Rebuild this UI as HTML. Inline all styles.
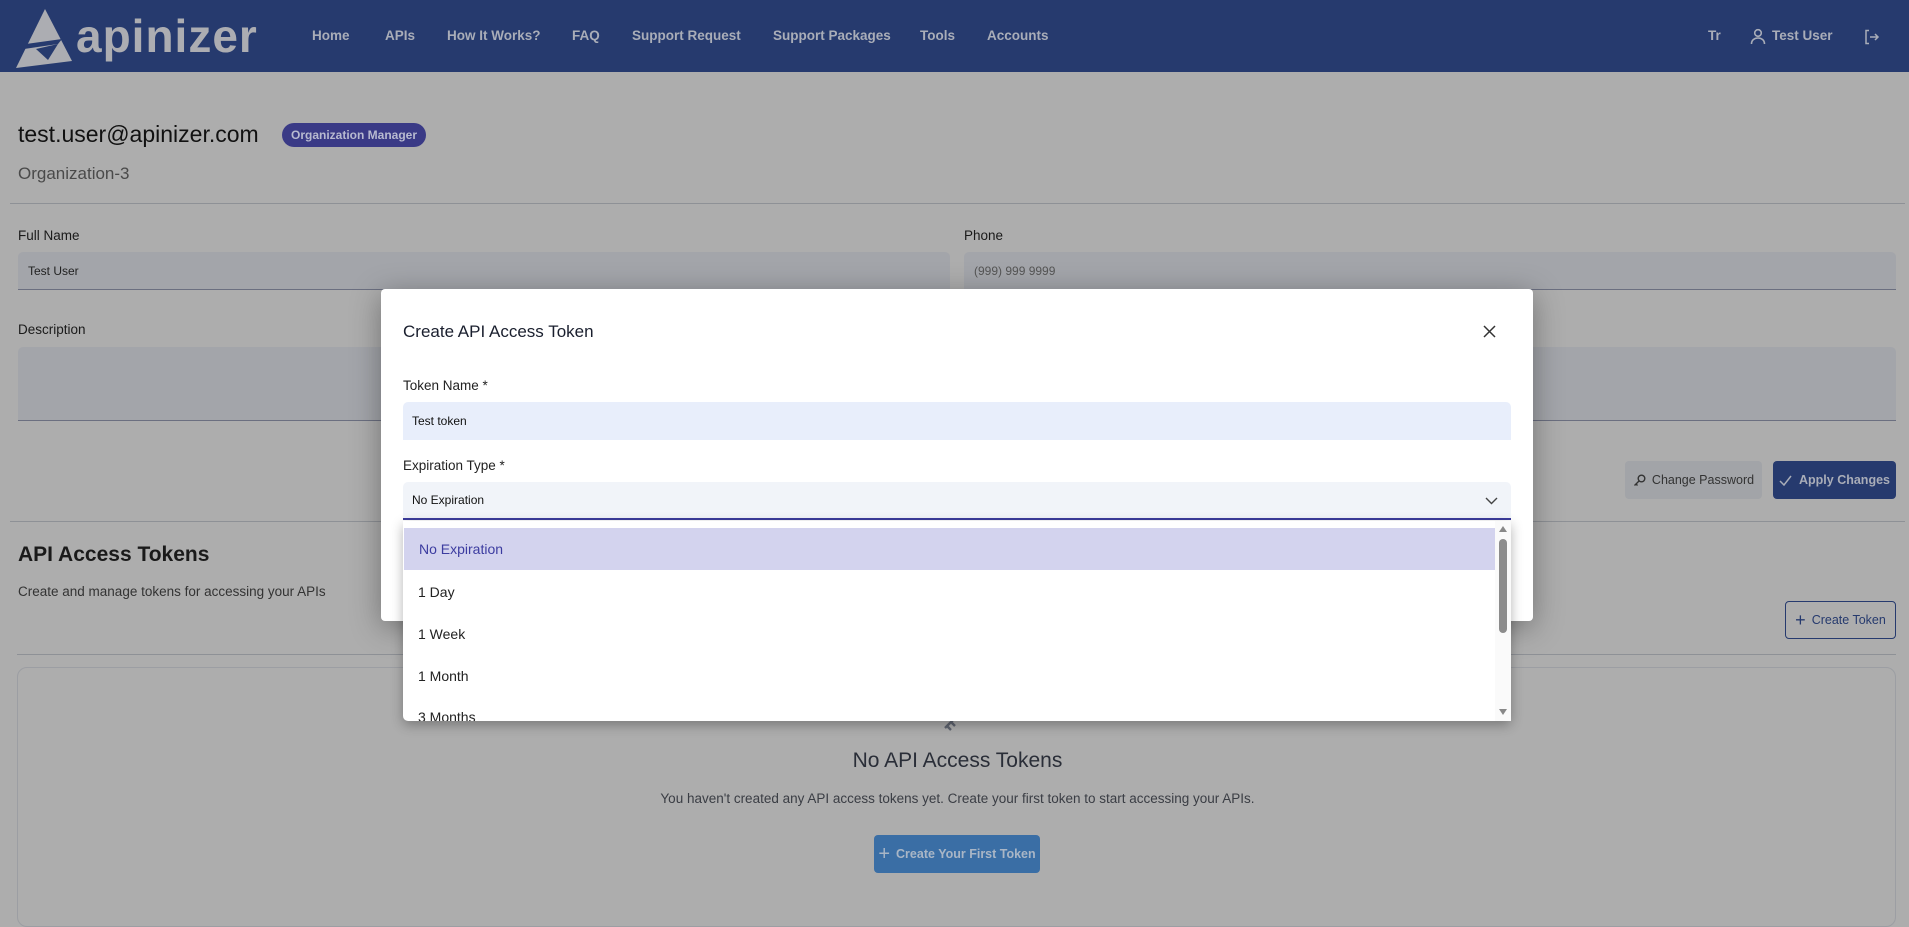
<!DOCTYPE html>
<html><head><meta charset="utf-8"><style>
*{box-sizing:border-box;margin:0;padding:0}
body{width:1909px;height:910px;overflow:hidden;background:#adadad;font-family:"Liberation Sans",sans-serif;position:relative;color:#111}
.abs{position:absolute}
.hdr{left:0;top:0;width:1909px;height:72px;background:#263a6e}
.nav{top:28px;font-size:13.5px;font-weight:bold;color:#a9adb8;white-space:nowrap}
.lbl{font-size:13.5px;color:#1a1a1a}
.inp{background:#a3a5aa;border-bottom:1.5px solid #6b6f80;border-radius:5px 5px 0 0;font-size:12px;color:#222;padding-left:10px;display:flex;align-items:center}
.hr{height:1px;background:#8e9196}
.opt{left:403px;width:1092px;height:42px;font-size:14px;color:#222;padding-left:15px;display:flex;align-items:center}
</style></head><body>
<div class="abs hdr"></div>
<svg class="abs" style="left:0;top:0" width="80" height="72"><polygon points="45,9 16,68 72,61" fill="#acadb2"/><polygon points="26,44 62,39 58,44 24,49" fill="#263a6e"/><polygon points="36,49 58,44 48,60" fill="#263a6e"/></svg>
<div class="abs" style="left:76px;top:6px;font-size:46px;font-weight:bold;color:#acadb2;letter-spacing:1px;line-height:60px">apinizer</div>
<div class="abs nav" style="left:312px">Home</div>
<div class="abs nav" style="left:385px">APIs</div>
<div class="abs nav" style="left:447px">How It Works?</div>
<div class="abs nav" style="left:572px">FAQ</div>
<div class="abs nav" style="left:632px">Support Request</div>
<div class="abs nav" style="left:773px">Support Packages</div>
<div class="abs nav" style="left:920px">Tools</div>
<div class="abs nav" style="left:987px">Accounts</div>
<div class="abs nav" style="left:1708px">Tr</div>
<svg class="abs" style="left:1750px;top:28px" width="16" height="17" fill="none" stroke="#a9adb8" stroke-width="1.6"><circle cx="8" cy="5" r="3.3"/><path d="M1.5 16c0-4 3-6 6.5-6s6.5 2 6.5 6"/></svg>
<div class="abs nav" style="left:1772px">Test User</div>
<svg class="abs" style="left:1864px;top:29px" width="16" height="16" fill="none" stroke="#a9adb8" stroke-width="1.5"><path d="M5 1.5H2v13h3M6 8h8M11 5l3 3-3 3"/></svg>

<div class="abs" style="left:18px;top:121px;font-size:23px;color:#111">test.user@apinizer.com</div>
<div class="abs" style="left:282px;top:123px;width:144px;height:24px;border-radius:12px;background:#3a3a86;color:#b8bad0;font-size:12px;font-weight:bold;display:flex;align-items:center;justify-content:center">Organization Manager</div>
<div class="abs" style="left:18px;top:164px;font-size:17px;color:#4a4a4a">Organization-3</div>
<div class="abs hr" style="left:10px;top:203px;width:1895px"></div>
<div class="abs lbl" style="left:18px;top:228px">Full Name</div>
<div class="abs inp" style="left:18px;top:252px;width:932px;height:38px">Test User</div>
<div class="abs lbl" style="left:964px;top:228px">Phone</div>
<div class="abs inp" style="left:964px;top:252px;width:932px;height:38px;color:#555">(999) 999 9999</div>
<div class="abs lbl" style="left:18px;top:322px">Description</div>
<div class="abs inp" style="left:18px;top:347px;width:1878px;height:74px"></div>
<div class="abs" style="left:1625px;top:461px;width:137px;height:38px;background:#a2a4a8;border-radius:4px;font-size:12.5px;color:#333;display:flex;align-items:center;justify-content:center;gap:6px"><svg width="13" height="13" fill="none" stroke="#333" stroke-width="1.4"><circle cx="8.5" cy="4.5" r="3.3"/><path d="M6 7L1.5 11.5M3 10l1.5 1.5"/></svg>Change Password</div>
<div class="abs" style="left:1773px;top:461px;width:123px;height:38px;background:#263a6e;border-radius:4px;font-size:12.5px;font-weight:bold;color:#a9adb8;display:flex;align-items:center;justify-content:center;gap:7px"><svg width="13" height="11" fill="none" stroke="#a9adb8" stroke-width="1.5"><path d="M1 6l4 4 7-9"/></svg>Apply Changes</div>
<div class="abs hr" style="left:10px;top:521px;width:1895px"></div>
<div class="abs" style="left:18px;top:543px;font-size:21px;font-weight:bold;color:#1a1a1a">API Access Tokens</div>
<div class="abs" style="left:18px;top:584px;font-size:13.5px;color:#333">Create and manage tokens for accessing your APIs</div>
<div class="abs" style="left:1785px;top:601px;width:111px;height:38px;border:1.5px solid #263a6e;border-radius:4px;font-size:12.5px;color:#263a6e;display:flex;align-items:center;justify-content:center;gap:6px"><span style="font-size:18px;line-height:12px">+</span>Create Token</div>
<div class="abs hr" style="left:17px;top:654px;width:1879px"></div>
<div class="abs" style="left:17px;top:667px;width:1879px;height:260px;border:1px solid #9c9ea3;border-radius:10px"></div>
<svg class="abs" style="left:938px;top:690px" width="50" height="50" fill="none" stroke="#5f6470" stroke-width="2.4"><circle cx="34" cy="12" r="9"/><path d="M27 18L7 38M9 36l4 4M13 32l4 4"/></svg>
<div class="abs" style="left:0;top:749px;width:1915px;text-align:center;font-size:21px;color:#2a2e38">No API Access Tokens</div>
<div class="abs" style="left:0;top:791px;width:1915px;text-align:center;font-size:13.5px;color:#3a3d44">You haven't created any API access tokens yet. Create your first token to start accessing your APIs.</div>
<div class="abs" style="left:874px;top:835px;width:166px;height:38px;background:#3a6ea5;border-radius:4px;font-size:12.5px;font-weight:bold;color:#a9b6c6;display:flex;align-items:center;justify-content:center;gap:6px"><span style="font-size:20px;font-weight:normal;line-height:12px">+</span>Create Your First Token</div>

<div class="abs" style="left:381px;top:289px;width:1152px;height:332px;background:#fff;border-radius:4px;box-shadow:0 6px 30px rgba(0,0,0,.35)"></div>
<div class="abs" style="left:403px;top:322px;font-size:17px;color:#1a1f2e">Create API Access Token</div>
<svg class="abs" style="left:1483px;top:325px" width="13" height="13" stroke="#333" stroke-width="1.5"><path d="M1 1l11 11M12 1L1 12"/></svg>
<div class="abs lbl" style="left:403px;top:378px;color:#222">Token Name *</div>
<div class="abs" style="left:403px;top:402px;width:1108px;height:38px;background:#e8eefb;border-radius:5px 5px 0 0;font-size:12px;color:#111;padding-left:9px;display:flex;align-items:center">Test token</div>
<div class="abs lbl" style="left:403px;top:458px;color:#222">Expiration Type *</div>
<div class="abs" style="left:403px;top:482px;width:1108px;height:38px;background:#f1f4f9;border-bottom:2px solid #3c3c9c;border-radius:5px 5px 0 0;font-size:12px;color:#111;padding-left:9px;display:flex;align-items:center">No Expiration</div>
<svg class="abs" style="left:1485px;top:497px" width="13" height="8" fill="none" stroke="#444" stroke-width="1.4"><path d="M1 1l5.5 5.5L12 1"/></svg>

<div class="abs" style="left:403px;top:521px;width:1108px;height:200px;background:#fff;border-radius:0 0 5px 5px;box-shadow:0 4px 12px rgba(0,0,0,.3);overflow:hidden">
</div>
<div class="abs opt" style="top:528px;background:#d3d3ee;color:#3c3ca0;left:404px;width:1091px">No Expiration</div>
<div class="abs opt" style="top:571px">1 Day</div>
<div class="abs opt" style="top:613px">1 Week</div>
<div class="abs opt" style="top:655px">1 Month</div>
<div class="abs" style="left:403px;top:697px;width:1092px;height:24px;overflow:hidden"><div style="font-size:14px;color:#222;padding-left:15px;margin-top:12px">3 Months</div></div>
<div class="abs" style="left:1495px;top:521px;width:16px;height:200px;background:#fafafa"></div>
<svg class="abs" style="left:1497px;top:524px" width="12" height="197"><polygon points="2,8 10,8 6,2" fill="#888"/><rect x="2" y="15" width="8" height="94" rx="4" fill="#8c8c8c"/><polygon points="2,185 10,185 6,191" fill="#888"/></svg>
</body></html>
